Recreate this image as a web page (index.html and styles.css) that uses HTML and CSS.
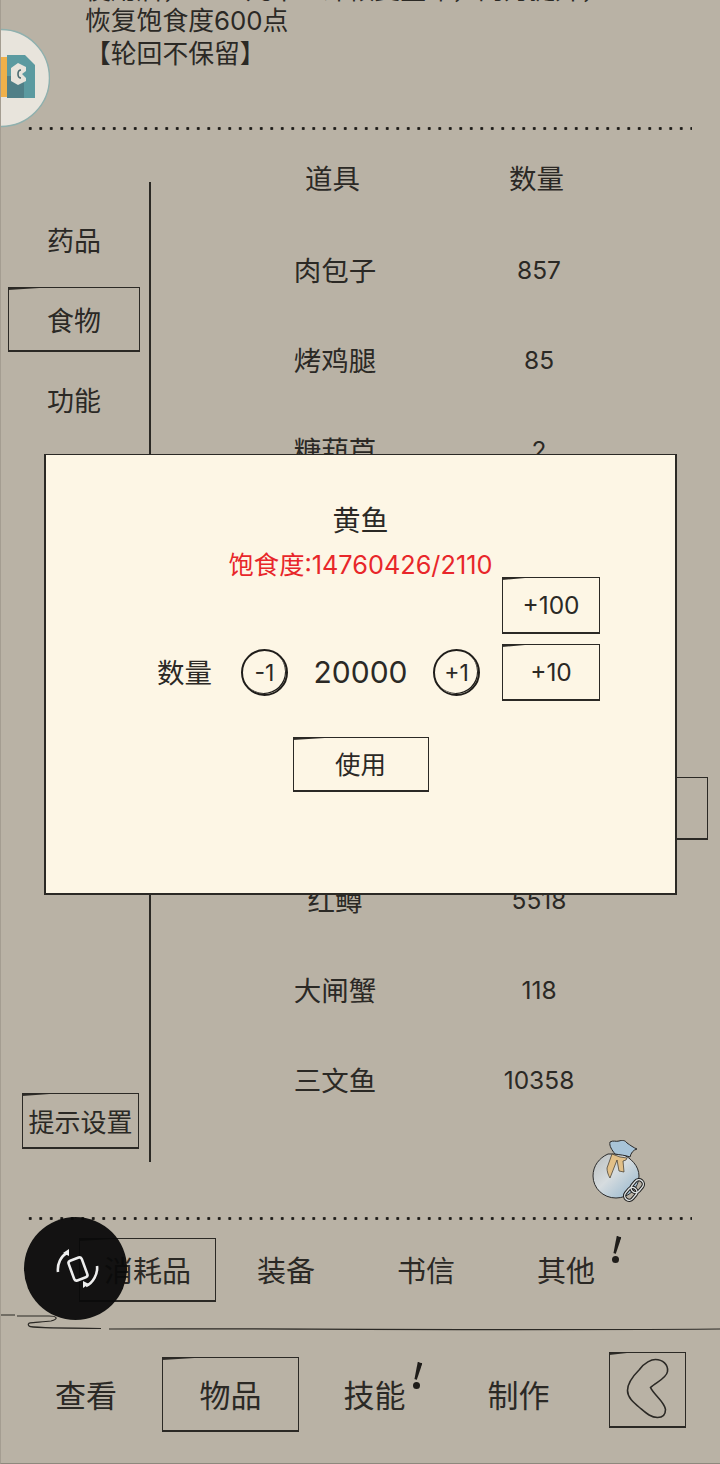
FILE: index.html
```html
<!DOCTYPE html>
<html lang="zh">
<head>
<meta charset="utf-8">
<title>物品</title>
<link rel="stylesheet" href="styles.css">
</head>
<body>
<div class="app">
  <div class="desc">
    <p class="clip-line">使用后，20%几率立即恢复生命，内力提升，</p>
    <p>恢复饱食度600点</p>
    <p>【轮回不保留】</p>
  </div>
  <div class="dots top-dots"></div>
  <div class="main">
    <div class="side">
      <div class="cats">
        <div class="cat">药品</div>
        <div class="cat sketch">食物</div>
        <div class="cat">功能</div>
      </div>
      <div class="hint sketch">提示设置</div>
    </div>
    <div class="list">
      <div class="row head"><span class="col">道具</span><span class="col">数量</span></div>
      <div class="row"><span class="col">肉包子</span><span class="col num">857</span></div>
      <div class="row"><span class="col">烤鸡腿</span><span class="col num">85</span></div>
      <div class="row"><span class="col">糖葫芦</span><span class="col num">2</span></div>
      <div class="row"></div>
      <div class="row"></div>
      <div class="row"></div>
      <div class="row"><span class="col"></span><span class="col"></span><span class="row-act sketch"></span></div>
      <div class="row"><span class="col">红鳟</span><span class="col num">5518</span></div>
      <div class="row"><span class="col">大闸蟹</span><span class="col num">118</span></div>
      <div class="row"><span class="col">三文鱼</span><span class="col num">10358</span></div>
    </div>
  </div>
  <div class="bag-row">
    <svg class="bag" viewBox="0 0 56 64" width="56" height="64" aria-hidden="true">
      <defs>
        <linearGradient id="bagfill" x1="0" y1="0" x2="1" y2="1">
          <stop offset="0" stop-color="#b9bdbd"/>
          <stop offset=".45" stop-color="#d6dcdf"/>
          <stop offset="1" stop-color="#8fb3cc"/>
        </linearGradient>
      </defs>
      <path d="M17 14C8 18 2 26 2 36c0 12 10 22 23 22 13 0 23-10 23-22 0-10-8-18-17-22z" fill="url(#bagfill)" stroke="#2a2a2a" stroke-width="1"/>
      <path d="M24 14c-3-4-6-8-5-12 3-2 6 0 9-1 3-1 6-1 8 2 3 2 7 5 10 6-4 1-6 4-7 8-5-2-10-2-15-3z" fill="#a8c4d8" stroke="#2a2a2a" stroke-width="1"/>
      <path d="M21 14l8 3 7 1-1 2-3 1 1 11-5-1-2-11-7 18c-2-3-3-7-3-10z" fill="#e2c088" stroke="#3a3226" stroke-width=".7"/>
      <g transform="rotate(-50 43 50)" fill="none" stroke="#1f1f1f" stroke-width="3.400">
        <rect x="31" y="45.500" width="14" height="9" rx="4.500"/>
        <rect x="41" y="45.500" width="14" height="9" rx="4.500"/>
      </g>
      <g transform="rotate(-50 43 50)" fill="none" stroke="#dfe3e3" stroke-width="1.400">
        <rect x="31" y="45.500" width="14" height="9" rx="4.500"/>
        <rect x="41" y="45.500" width="14" height="9" rx="4.500"/>
      </g>
    </svg>
  </div>
  <div class="dots bottom-dots"></div>
  <div class="tabs">
    <div class="tab tab-on sketch">消耗品</div>
    <div class="tab">装备</div>
    <div class="tab">书信</div>
    <div class="tab">其他<i class="bang bang-tab"></i></div>
  </div>
  <div class="rule-wrap">
    <svg class="rule" viewBox="0 0 720 24" width="720" height="24" aria-hidden="true">
      <path d="M0 3H14M16 4H48C56 4 58 7 50 9 38 11 24 9 28 14 30 16 48 16 100 16.500M108 17C260 16 420 19 720 17" fill="none" stroke="#2b2925" stroke-width="1.200"/>
    </svg>
  </div>
  <nav class="nav">
    <div class="nav-item nav-see">查看</div>
    <div class="nav-item nav-goods sketch">物品</div>
    <div class="nav-item nav-skill">技能<i class="bang bang-nav"></i></div>
    <div class="nav-item nav-make">制作</div>
    <div class="nav-back sketch">
      <svg viewBox="0 0 74 73" width="74" height="73" aria-hidden="true">
        <path transform="translate(-1.500 -1.500)" d="M30 18C35 11 42 8 46 8 53 8 59 13 58 20 57 27 46 31 41 36 44 43 55 50 56 58 56 64 52 66 48 66 41 66 36 61 30 56 24 51 18 46 18 39 18 32 24 24 30 18z" fill="none" stroke="#2b2925" stroke-width="1.600"/>
      </svg>
    </div>
  </nav>

  <div class="logo">
    <svg viewBox="0 0 50 100" width="50" height="100" aria-hidden="true">
      <circle cx="1" cy="50" r="48.500" fill="#e8e4dc" stroke="#8fb0ae" stroke-width="1.500"/>
      <path d="M0 29H7V69H0z" fill="#efb04a"/>
      <path d="M7 27H25L35 37V70H7z" fill="#5b9aa0"/>
      <path d="M7 48H24V70H7z" fill="#507f87"/>
      <path d="M18 35L26 39V43L22 46 26 50V53L18 57 11 53V40z" fill="#e8e4dc"/>
      <path d="M21 42C17 42 17 50 21 50" fill="none" stroke="#4a6a70" stroke-width="1.600"/>
    </svg>
  </div>

  <div class="modal">
    <h2 class="m-title">黄鱼</h2>
    <p class="m-stat">饱食度:14760426/2110</p>
    <div class="m-big m-hundred sketch">+100</div>
    <div class="m-qty">
      <span class="m-label">数量</span>
      <span class="circle">-1</span>
      <span class="m-num">20000</span>
      <span class="circle">+1</span>
      <span class="m-big m-ten sketch">+10</span>
    </div>
    <div class="m-use sketch">使用</div>
  </div>

  <div class="float-ball">
    <svg viewBox="0 0 48 48" width="48" height="48" aria-hidden="true">
      <g fill="none" stroke="#eeeeee" stroke-width="2.600">
        <rect x="19" y="13.500" width="14" height="21" rx="2.500" transform="rotate(-20 26 24)"/>
        <path d="M15 8C9 11 5 19 6 27M45 21C46 29 41 38 34 41"/>
      </g>
      <path d="M17 4L17 11 11 8zM31 43L31 36 37 39z" fill="#eeeeee"/>
    </svg>
  </div>
</div>
</body>
</html>
```
FILE: styles.css
```css
* { box-sizing: border-box; }
html, body { margin: 0; padding: 0; }
body {
  width: 720px;
  height: 1464px;
  overflow: hidden;
  background: #b9b2a5;
  color: #2b2925;
  font-family: Inter, "Noto Sans CJK SC", "Noto Sans", sans-serif;
}
p, h2 { margin: 0; font-weight: 400; }
.app { position: relative; width: 720px; height: 1464px; overflow: hidden; display: flex; flex-direction: column; border-left: 1px solid #a49d91; border-bottom: 1px solid #8e887d; }

.sketch { position: relative; border: 1.500px solid #2b2925; border-bottom-width: 2.500px; }
.sketch::before { content: ""; position: absolute; left: -1px; top: -1.500px; width: 24%; height: 3.500px; background: #2b2925; clip-path: polygon(0 0, 100% 0, 100% 40%, 0 100%); }

.desc { height: 70px; padding-left: 84px; display: flex; flex-direction: column; justify-content: flex-end; font-size: 25.800px; line-height: 33px; overflow: hidden; flex: none; }
.clip-line { white-space: nowrap; margin-bottom: -2px; }

.dots { height: 3px; flex: none; margin-left: 24px; width: 667px; background-image: radial-gradient(circle, #1f1d1a 1.300px, transparent 1.700px); background-size: 10.500px 3px; background-repeat: repeat-x; }
.top-dots { margin-top: 57px; }

.main { display: flex; flex: none; height: 1087px; }
.side { width: 150px; height: 980px; flex: none; margin-top: 52px; border-right: 2px solid #2b2925; display: flex; flex-direction: column; justify-content: space-between; padding-left: 7px; }
.cats { display: flex; flex-direction: column; margin-top: 25px; }
.cat { width: 132px; height: 65px; margin-bottom: 15px; display: flex; align-items: center; justify-content: center; font-size: 27px; }
.hint { width: 117px; height: 56px; margin-left: 14px; margin-bottom: 13px; font-size: 26px; display: flex; align-items: center; justify-content: center; white-space: nowrap; }

.list { flex: 1; padding-top: 3px; padding-left: 82px; }
.row { height: 90px; display: flex; align-items: center; font-size: 27.500px; line-height: 1; }
.col { width: 204px; text-align: center; flex: none; padding-top: 3px; }
.num { font-size: 24.500px; padding-top: 0; }
.head { height: 92px; }
.head .col { margin-left: -2.500px; margin-right: 2.500px; padding-top: 2px; }
.row-act { width: 67px; height: 63px; margin-top: -3px; flex: none; }

.bag-row { height: 0; position: relative; flex: none; }
.bag { position: absolute; left: 590px; top: -77px; }

.tabs { height: 92px; flex: none; display: flex; padding-left: 78px; padding-top: 18px; font-size: 29px; }
.tab { width: 140px; height: 64px; padding-bottom: 2px; display: flex; align-items: center; justify-content: center; position: relative; }
.tab-on { width: 137px; }
.bang { position: absolute; display: block; width: 9px; height: 27px; }
.bang::before { content: ""; position: absolute; left: 2px; top: 0; width: 6px; height: 18px; background: #1f1d1a; clip-path: polygon(20% 0, 100% 4%, 55% 100%, 15% 100%); transform: rotate(10deg); }
.bang::after { content: ""; position: absolute; left: 0; top: 20px; width: 7px; height: 7px; background: #1f1d1a; border-radius: 50%; }
.bang-tab { right: 15px; top: -2px; }
.bang-nav { right: 28px; top: 5px; }

.rule-wrap { height: 24px; flex: none; }
.rule { display: block; }

.nav { flex: 1; display: flex; align-items: flex-start; font-size: 31px; padding-top: 21px; }
.nav-item { height: 75px; padding-bottom: 2px; display: flex; align-items: center; justify-content: center; position: relative; flex: none; }
.nav-see { width: 136px; margin-right: 25px; padding-left: 34px; }
.nav-goods { width: 137px; }
.nav-skill { width: 151px; }
.nav-make { width: 137px; }
.nav-back { width: 77px; height: 76px; margin-left: 22px; margin-top: -5px; display: flex; align-items: center; justify-content: center; flex: none; }

.logo { position: absolute; left: -1px; top: 28px; width: 50px; height: 100px; }

.modal { position: absolute; left: 43px; top: 454px; width: 633px; height: 441px; background: #fdf6e5; border: 2px solid #2b2925; border-top-width: 1.500px; display: flex; flex-direction: column; align-items: center; }
.m-title { font-size: 28px; line-height: 40px; margin-top: 46px; }
.m-stat { font-size: 25.300px; line-height: 34px; margin-top: 7px; color: #e8262a; }
.m-big { width: 98px; height: 57px; display: flex; align-items: center; justify-content: center; font-size: 24.500px; }
.m-hundred { align-self: flex-end; margin-right: 75px; margin-top: -5px; }
.m-qty { display: flex; align-items: center; width: 100%; margin-top: 10px; height: 57px; padding-left: 111px; }
.m-label { font-size: 27.500px; width: 84px; margin-bottom: 4px; }
.circle { width: 47px; height: 47px; border: 2px solid #1f1d1a; border-radius: 50%; box-shadow: inset -1px -1px 0 #1f1d1a; display: flex; align-items: center; justify-content: center; font-size: 23px; flex: none; }
.m-num { width: 145px; text-align: center; font-size: 30px; margin-bottom: 1px; }
.m-ten { margin-left: 22px; flex: none; }
.m-use { width: 136px; height: 55px; padding-bottom: 4px; margin-top: 36px; display: flex; align-items: center; justify-content: center; font-size: 25.500px; }

.float-ball { position: absolute; left: 23px; top: 1217px; width: 103px; height: 103px; background: rgba(10, 10, 10, .95); border-radius: 50%; display: flex; align-items: center; justify-content: center; }
```
